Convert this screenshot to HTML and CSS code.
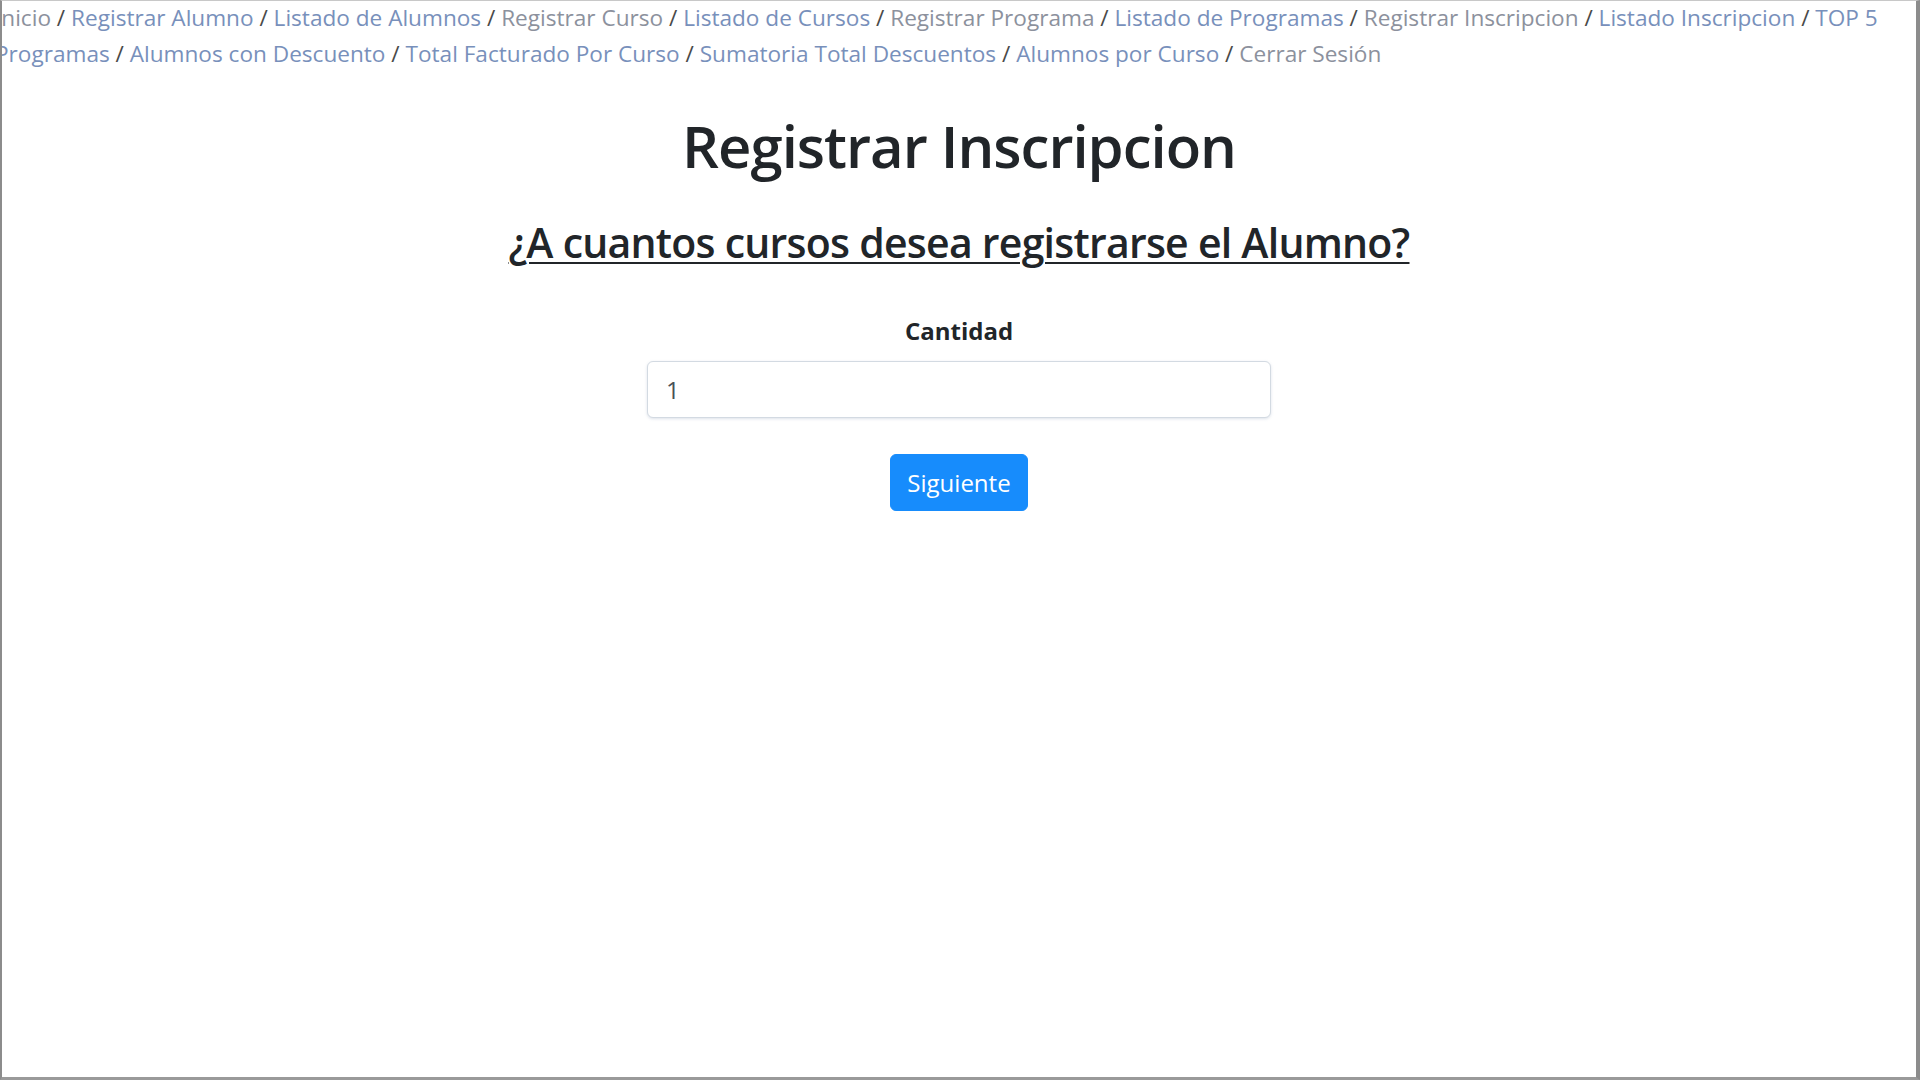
FILE: index.html
```html
<!DOCTYPE html>
<html lang="es">
<head>
<meta charset="utf-8">
<title>Registrar Inscripcion</title>
<link rel="stylesheet" href="styles.css">
</head>
<body>
<div class="frame">
  <nav class="topnav">
    <a class="lk muted" href="#">Inicio</a> / <a class="lk" href="#">Registrar Alumno</a> / <a class="lk" href="#">Listado de Alumnos</a> / <a class="lk muted" href="#">Registrar Curso</a> / <a class="lk" href="#">Listado de Cursos</a> / <a class="lk muted" href="#">Registrar Programa</a> / <a class="lk" href="#">Listado de Programas</a> / <a class="lk muted" href="#">Registrar Inscripcion</a> / <a class="lk" href="#">Listado Inscripcion</a> / <a class="lk" href="#top5">TOP 5</a> <a class="lk" href="#top5">Programas</a> / <a class="lk" href="#">Alumnos con Descuento</a> / <a class="lk" href="#">Total Facturado Por Curso</a> / <a class="lk" href="#">Sumatoria Total Descuentos</a> / <a class="lk" href="#">Alumnos por Curso</a> / <a class="lk muted" href="#">Cerrar Sesión</a>
  </nav>
  <main class="content">
    <h1 class="title">Registrar Inscripcion</h1>
    <h3 class="question">¿A cuantos cursos desea registrarse el Alumno?</h3>
    <form class="form">
      <label class="label" for="cantidad">Cantidad</label>
      <input class="input" id="cantidad" type="text" value="1">
      <button class="btn" type="button">Siguiente</button>
    </form>
  </main>
</div>
</body>
</html>
```
FILE: styles.css
```css
html, body {
  margin: 0;
  padding: 0;
  background: #fff;
}
.frame {
  box-sizing: border-box;
  height: 100vh;
  overflow: hidden;
  border-left: 2px solid #8c8c8c;
  border-right: 4px solid #8c8c8c;
  border-bottom: 3px solid #9a9a9a;
  border-top: 1px solid #c8c8c8;
  font-family: "Open Sans", sans-serif;
  color: #212529;
}
.topnav {
  margin: -1px 0 0 -7px;
  font-size: 22.6px;
  line-height: 35.5px;
  color: #4a4a4a;
}
.lk {
  color: #7890bb;
  text-decoration: none;
}
.lk.muted {
  color: #8c919d;
}
.content {
  display: flex;
  flex-direction: column;
  align-items: center;
}
.title {
  margin: 40px 0 0;
  font-size: 58px;
  font-weight: 600;
  line-height: 70px;
  letter-spacing: -1px;
}
.question {
  margin: 36px 0 0;
  font-size: 41px;
  font-weight: 600;
  line-height: 50px;
  letter-spacing: -0.75px;
  text-decoration: underline;
  text-underline-offset: 4px;
  text-decoration-thickness: 2px;
}
.form {
  display: flex;
  flex-direction: column;
  align-items: center;
  margin-top: 46px;
}
.label {
  font-size: 24px;
  font-weight: 700;
  line-height: 36px;
  margin-bottom: 12px;
}
.input {
  box-sizing: border-box;
  width: 624px;
  height: 57px;
  padding: 9px 18px;
  font-family: "Open Sans", sans-serif;
  font-size: 24px;
  color: #495057;
  border: 1px solid #d3dae2;
  border-radius: 6px;
  box-shadow: 0 1px 3px rgba(120, 140, 170, 0.25);
  outline: none;
}
.btn {
  margin-top: 36px;
  height: 57px;
  padding: 9px 16px;
  font-family: "Open Sans", sans-serif;
  font-size: 24px;
  color: #fff;
  background: #178cfc;
  border: 1px solid #178cfc;
  border-radius: 6px;
}
```
